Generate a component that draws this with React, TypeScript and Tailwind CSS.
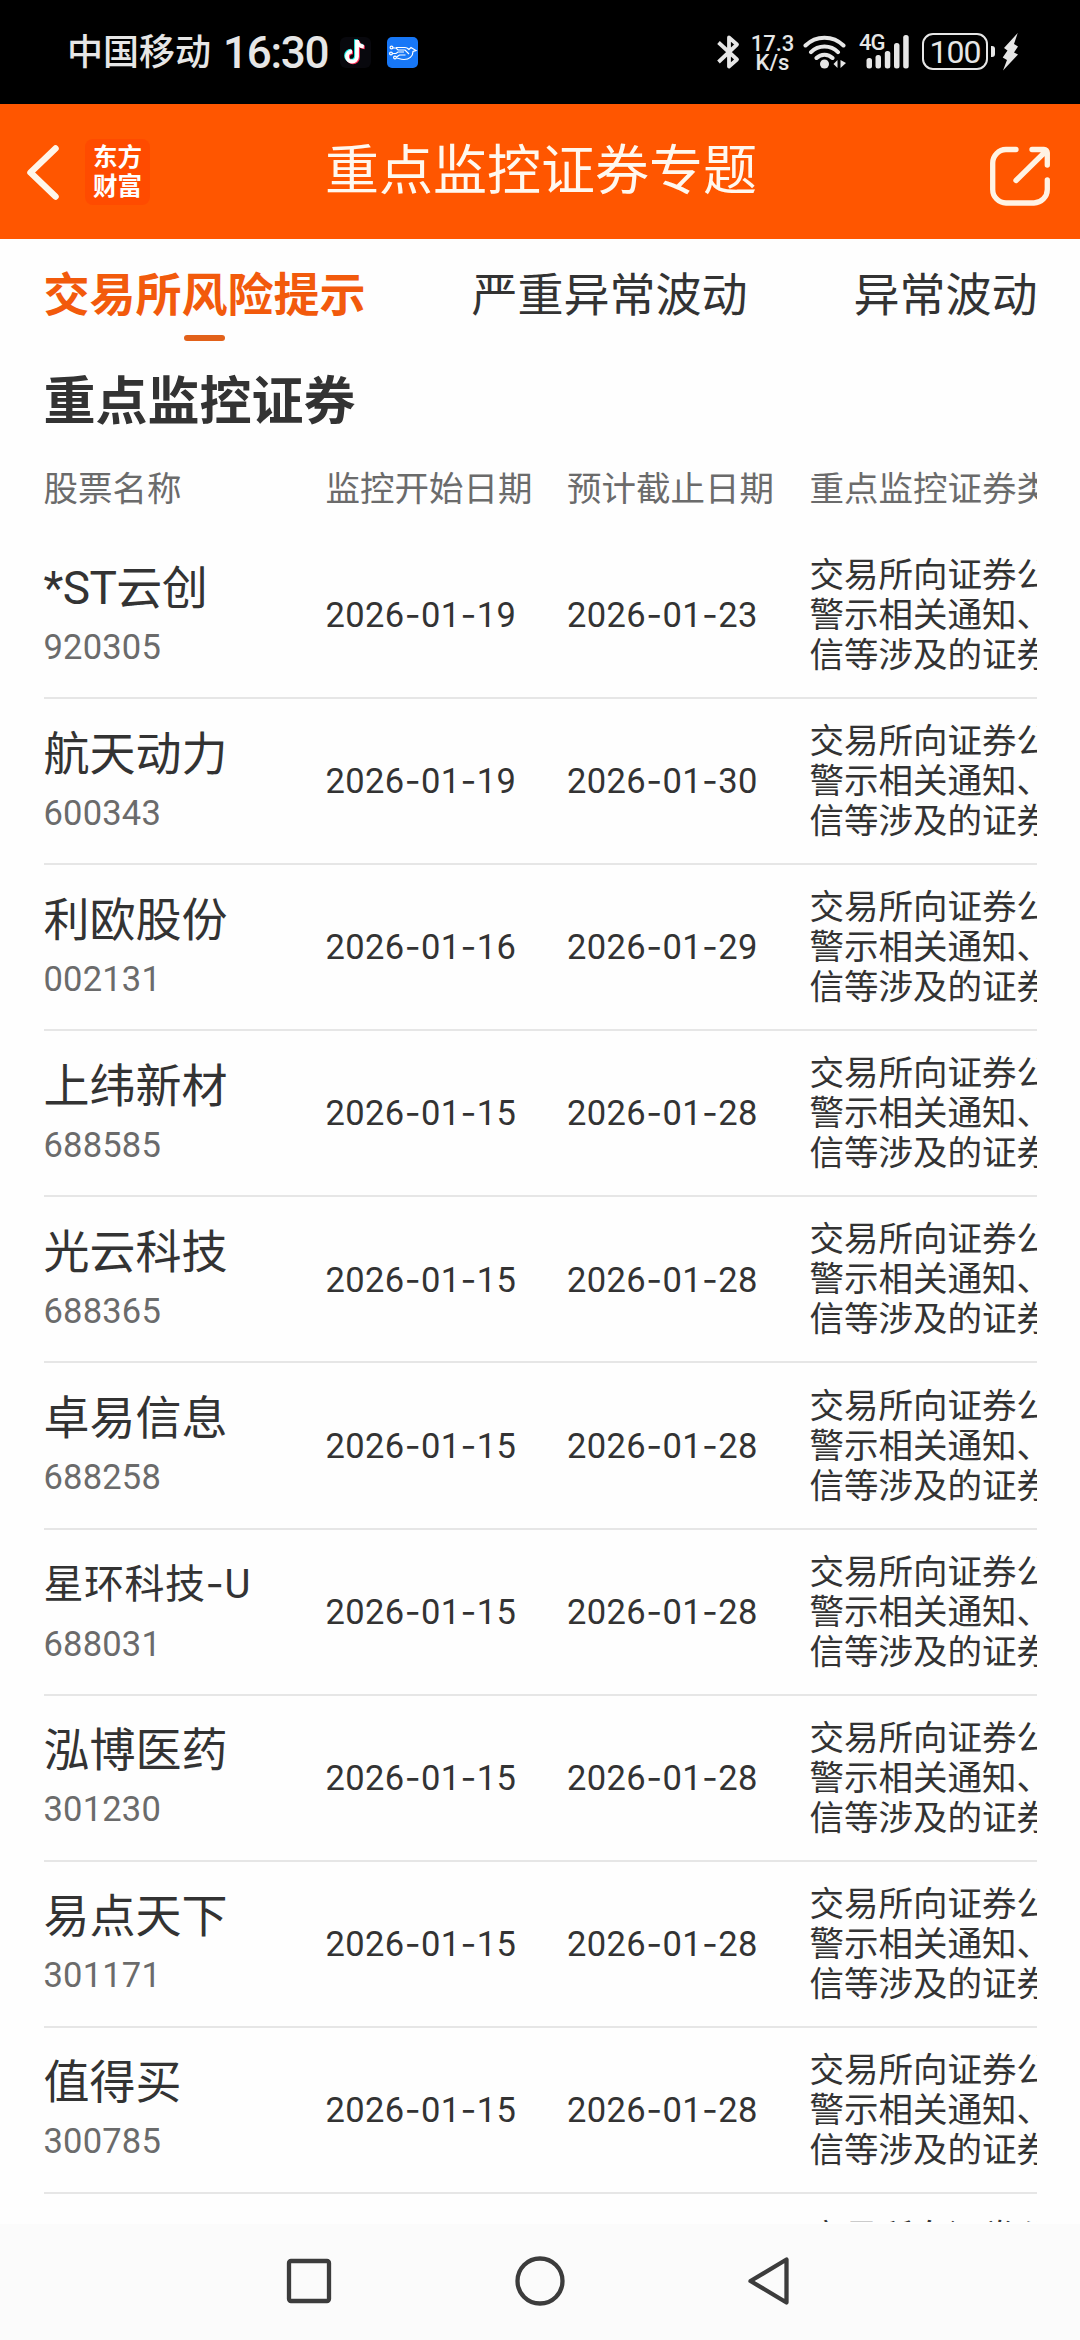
import React from 'react';

type Stock = {
  name: string;
  code: string;
  start: string;
  end: string;
  nameClass?: string;
};

const STOCKS: Stock[] = [
  { name: '*ST云创', code: '920305', start: '2026-01-19', end: '2026-01-23', nameClass: 'text-[46px] tracking-[-0.600px]' },
  { name: '航天动力', code: '600343', start: '2026-01-19', end: '2026-01-30' },
  { name: '利欧股份', code: '002131', start: '2026-01-16', end: '2026-01-29' },
  { name: '上纬新材', code: '688585', start: '2026-01-15', end: '2026-01-28' },
  { name: '光云科技', code: '688365', start: '2026-01-15', end: '2026-01-28' },
  { name: '卓易信息', code: '688258', start: '2026-01-15', end: '2026-01-28' },
  { name: '星环科技-U', code: '688031', start: '2026-01-15', end: '2026-01-28', nameClass: 'text-[40px] tracking-[0.500px]' },
  { name: '泓博医药', code: '301230', start: '2026-01-15', end: '2026-01-28' },
  { name: '易点天下', code: '301171', start: '2026-01-15', end: '2026-01-28' },
  { name: '值得买', code: '300785', start: '2026-01-15', end: '2026-01-28' },
];

const REASON = ['交易所向证券公', '警示相关通知、', '信等涉及的证券'];

// Hyphens come from Inter, they are wider than the Roboto ones
const Hyphenated = ({ text }: { text: string }) => (
  <>
    {text.split('-').map((part, i) => (
      <React.Fragment key={i}>
        {i > 0 && <span className="font-['Inter']">-</span>}
        {part}
      </React.Fragment>
    ))}
  </>
);

const NOTE = 'M17 2.500v16.500a5 5 0 1 1-5-5M17 3c.4 3.400 3 5.800 6.800 6.100';

const StatusBar = () => (
  <div className="h-[104px] bg-black shrink-0 flex items-start text-[#e6e6e6] pl-[67px] pt-[33px]">
    <span className="w-[156px] pt-px text-[36px] leading-[38px] font-medium">中国移动</span>
    <span className="w-[117px] text-[44px] leading-[41px] font-medium tracking-[-1.300px]">16:30</span>
    <svg className="mt-1 shrink-0" width="31" height="31" viewBox="0 0 31 31">
      <rect width="31" height="31" rx="6" fill="#08080d" />
      <g fill="none" strokeWidth="3.800">
        <path d={NOTE} transform="translate(-1 -.3)" stroke="#25f4ee" />
        <path d={NOTE} transform="translate(1 1.300)" stroke="#fe2c55" />
        <path d={NOTE} transform="translate(0 .5)" stroke="#fff" />
      </g>
    </svg>
    <svg className="mt-1 ml-4 shrink-0" width="31" height="31" viewBox="0 0 31 31">
      <rect width="31" height="31" rx="5" fill="#1777f7" />
      <g fill="none" stroke="#fff" strokeWidth="1.200">
        <circle cx="4.500" cy="10.500" r="1.400" />
        <circle cx="4" cy="16.500" r="1.400" />
        <circle cx="8" cy="20.500" r="1.400" />
        <path d="M6 11h3l2 2h7l4 4M9 10.500h9c2 0 3 1 4 2l2-2 5 3-3 1c0 5-4 8-9 8-3 0-5-1-7-1.500M5.500 16.500H9l2-1.500h6M9.500 20l3-2h6" />
      </g>
    </svg>
    <svg className="ml-[299px] mt-px shrink-0" width="23" height="36" viewBox="0 0 23 36" fill="none" stroke="#e6e6e6" strokeWidth="3.800" strokeLinejoin="round">
      <path d="M1.500 8.500 20 25.500 12 32.500V3.500L20 10.500 1.500 28" />
    </svg>
    <div className="ml-[11px] w-[43px] mt-[1px] flex flex-col items-center text-[22px] leading-[19px] font-medium">
      <span>17.3</span>
      <span>K/s</span>
    </div>
    <svg className="ml-[9px] mt-px shrink-0" width="46" height="36" viewBox="0 0 46 36" fill="none" stroke="#e6e6e6" strokeWidth="4" strokeLinecap="round">
      <path d="M2.500 11.500a27 27 0 0 1 38 0M8 18.200a19 19 0 0 1 27 0M13.500 24a11.500 11.500 0 0 1 16 0" />
      <circle cx="21.500" cy="30" r="4.500" fill="#e6e6e6" stroke="none" />
      <path d="M34.500 26v8l-4-4zM37.500 26v8l5.500-5z" fill="#e6e6e6" stroke="none" />
    </svg>
    <div className="relative w-[51px] h-9 ml-[10px] mt-px">
      <span className="absolute left-0 top-0 text-[22px] leading-[18px] font-medium tracking-[-1px]">4G</span>
      <svg className="absolute inset-0" width="51" height="36" viewBox="0 0 51 36" fill="#e6e6e6">
        <rect x="7.500" y="24" width="5.500" height="10.500" rx="2.500" />
        <rect x="16.500" y="21" width="5.500" height="13.500" rx="2.500" />
        <rect x="25.800" y="17" width="5.500" height="17.500" rx="2.500" />
        <rect x="35" y="9" width="5.500" height="25.500" rx="2.500" />
        <rect x="44.200" y="1" width="5.500" height="33.500" rx="2.500" />
      </svg>
    </div>
    <div className="ml-[12px] w-[66px] h-[37px] border-[2.500px] border-[#e6e6e6] rounded-[11px] flex items-center justify-center text-[32px] leading-none tracking-[-1px]">100</div>
    <div className="ml-[3px] mt-[13px] w-[4px] h-[11px] rounded-r-[3px] bg-[#e6e6e6]" />
    <svg className="ml-[7px] shrink-0" width="17" height="38" viewBox="0 0 17 38" fill="#e6e6e6">
      <path d="M15.700 0 2 15l3.500 2.500-4.800 7L5 27 1 37.500l15-16-4-2 4-6L12 11z" />
    </svg>
  </div>
);

const Header = () => (
  <header className="h-[135px] bg-[#ff5600] shrink-0 flex items-center pl-6 pr-7 text-[#fff8ef]">
    <svg width="38" height="60" viewBox="0 0 38 60" fill="none" stroke="#fff6ea" strokeWidth="6.500" strokeLinecap="round" strokeLinejoin="round">
      <path d="M31.500 6.500 6.500 30.500l25 24" />
    </svg>
    <div className="ml-[23px] w-[65px] h-[66px] rounded-lg bg-[#ff4b00] flex flex-col items-center justify-center text-[24.500px] leading-[29px] font-bold text-white">
      <span>东方</span>
      <span>财富</span>
    </div>
    <h1 className="flex-1 pl-[175px] text-[54px] leading-[60px]">重点监控证券专题</h1>
    <svg className="mt-2" width="64" height="64" viewBox="0 0 64 64" fill="none" stroke="#fff3e4" strokeWidth="5.300" strokeLinecap="round" strokeLinejoin="round">
      <path d="M28 5.500H18A13.500 13.500 0 0 0 4.700 19v26.500A13.500 13.500 0 0 0 18 59h28a13.500 13.500 0 0 0 13.300-13.500V36" />
      <path d="M44 5.500h12a3.300 3.300 0 0 1 3.300 3.300V21M58 7 28 36.500" />
    </svg>
  </header>
);

const Tabs = () => (
  <nav className="flex justify-between pl-[43.500px] pr-[42.500px] pt-[29px] h-[116px] text-[46px] leading-[54px] text-[#333]">
    <div className="flex flex-col items-center font-bold text-[#f25a0c]">
      交易所风险提示
      <div className="mt-[13px] w-[41px] h-[6px] rounded-full bg-[#e2611a]" />
    </div>
    <div>严重异常波动</div>
    <div>异常波动</div>
  </nav>
);

const Row = ({ stock }: { stock: Stock }) => (
  <div className="grid grid-cols-[282px_241.500px_242.500px_1fr] h-[166.100px] shrink-0 border-b-2 border-[#e6e6e6] items-center text-[34.500px] text-[#333]">
    <div className="pt-[3px]">
      <div className={`leading-[60px] ${stock.nameClass ?? 'text-[46px]'}`}>
        <Hyphenated text={stock.name} />
      </div>
      <div className="leading-[58px] tracking-[0.200px] text-[#6b6b6b]">{stock.code}</div>
    </div>
    <div className="pt-px tracking-[0.400px]"><Hyphenated text={stock.start} /></div>
    <div className="pt-px tracking-[0.400px]"><Hyphenated text={stock.end} /></div>
    <div className="leading-[40px] whitespace-nowrap overflow-hidden">
      {REASON.map((line) => (
        <div key={line}>{line}</div>
      ))}
    </div>
  </div>
);

const NavBar = () => (
  <footer className="h-[116px] shrink-0 bg-[#fbfbfb] flex justify-center items-center">
    <svg width="510" height="56" viewBox="0 0 510 56" fill="none" stroke="#3c3c3c" strokeWidth="4.300" strokeLinejoin="round">
      <rect x="4" y="7" width="40" height="40" rx="2" />
      <circle cx="255" cy="27" r="22.500" />
      <path d="M465.500 27 501.500 5.500v43z" />
    </svg>
  </footer>
);

const App = () => {
  return (
    <div className="w-[1080px] h-[2340px] flex flex-col overflow-hidden bg-[#fefefe] font-['Roboto','Noto_Sans_CJK_SC',sans-serif]">
      <StatusBar />
      <Header />
      <Tabs />
      <main className="flex-1 min-h-0 overflow-hidden flex flex-col pl-[43.500px] pr-[43px] border-b-2 border-[#fefefe]">
        <h2 className="shrink-0 h-[75px] text-[52px] leading-[60px] pt-[18px] font-bold text-[#333]">重点监控证券</h2>
        <div className="grid grid-cols-[282px_241.500px_242.500px_1fr] shrink-0 h-[103px] pt-[39px] text-[34.500px] leading-[40px] text-[#6b6b6b] whitespace-nowrap">
          <div>股票名称</div>
          <div>监控开始日期</div>
          <div>预计截止日期</div>
          <div className="h-10 overflow-hidden">重点监控证券类</div>
        </div>
        {STOCKS.map((stock) => (
          <Row key={stock.code} stock={stock} />
        ))}
        <div className="shrink-0 pl-[766px] pt-[23px] text-[34.500px] leading-[40px] text-[#333] whitespace-nowrap overflow-hidden">{REASON[0]}</div>
      </main>
      <NavBar />
    </div>
  );
};

export default App;
